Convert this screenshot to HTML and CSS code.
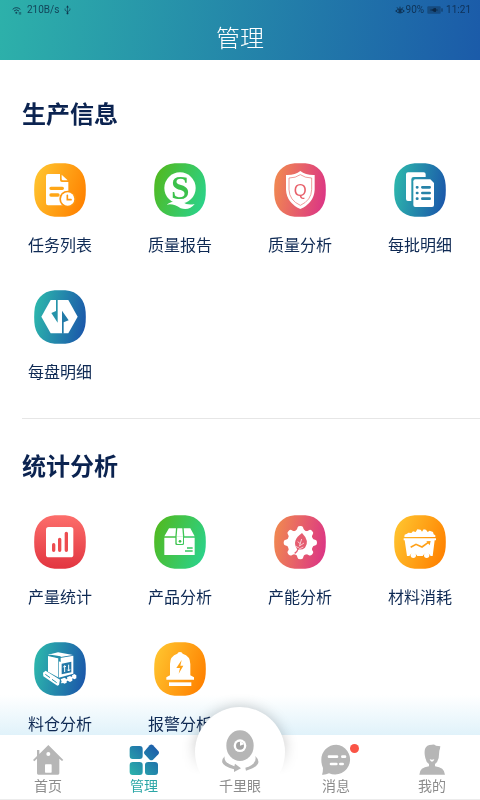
FILE: index.html
```html
<!DOCTYPE html>
<html lang="zh-CN">
<head>
<meta charset="utf-8">
<meta name="viewport" content="width=device-width, initial-scale=1">
<title>管理</title>
<link rel="stylesheet" href="styles.css">
</head>
<body>
<svg class="defs" aria-hidden="true">
  <defs>
    <linearGradient id="orange" x1="0" y1="0.3" x2="1" y2="0.7"><stop offset="0" stop-color="#ffc22d"/><stop offset="1" stop-color="#ff8100"/></linearGradient>
    <linearGradient id="green" x1="0" y1="0.3" x2="1" y2="0.7"><stop offset="0" stop-color="#50ba22"/><stop offset="1" stop-color="#2bd28a"/></linearGradient>
    <linearGradient id="pink" x1="0" y1="0.4" x2="1" y2="0.6"><stop offset="0" stop-color="#f08751"/><stop offset="1" stop-color="#dc3684"/></linearGradient>
    <linearGradient id="blue" x1="0" y1="0.4" x2="1" y2="0.6"><stop offset="0" stop-color="#2cb5ac"/><stop offset="1" stop-color="#1b58aa"/></linearGradient>
    <linearGradient id="red" x1="0" y1="0" x2="0" y2="1"><stop offset="0" stop-color="#fc6e6b"/><stop offset="1" stop-color="#e23540"/></linearGradient>
    <linearGradient id="tab" gradientUnits="userSpaceOnUse" x1="5" y1="90" x2="90" y2="5"><stop offset="0" stop-color="#2bb2ab"/><stop offset="1" stop-color="#1b58aa"/></linearGradient>
    <path id="blob" d="M62 1Q78 0 94 1C132 4 153 30 155 66Q156 81 155 96C153 132 132 158 94 161Q78 162 62 161C24 158 3 132 1 96Q0 81 1 66C3 30 24 4 62 1Z"/>
  </defs>
</svg>
<div class="app">
  <header class="header">
    <div class="status">
      <div class="status-group">
        <svg class="wifi" viewBox="0 0 30 27"><path d="M2 10Q13 0 25 10M6 15Q13 8 21 15" fill="none" stroke="currentColor" stroke-width="3"/><circle cx="13" cy="20" r="3" fill="currentColor"/><path d="M22 18v8M26 18v8" stroke="currentColor" stroke-width="2"/></svg>
        <span>210B/s</span>
        <svg class="usb" viewBox="0 0 20 27"><path d="M10 3V24M3 9v5l7 5 7-5V9" fill="none" stroke="currentColor" stroke-width="2"/><path d="M6 6l4-6 4 6Z" fill="currentColor"/><circle cx="10" cy="23" r="3" fill="currentColor"/></svg>
      </div>
      <div class="status-group status-right">
        <svg class="eye" viewBox="0 0 30 27"><path d="M2 15Q15 3 28 15Q15 27 2 15ZM15 2v6M6 4l4 5M24 4l-4 5" fill="none" stroke="currentColor" stroke-width="3"/><circle cx="15" cy="15" r="5" fill="currentColor"/></svg>
        <span>90%</span>
        <svg class="battery" viewBox="0 0 48 24"><rect x="1" y="1" width="40" height="22" rx="3" fill="currentColor" opacity=".5"/><path d="M10 12h22" stroke="currentColor" stroke-width="3"/><path d="M15 12l6-6h6v12h-6Z" fill="currentColor"/><path d="M45 7v10" stroke="currentColor" stroke-width="3"/></svg>
        <span>11:21</span>
      </div>
    </div>
    <h1 class="title">管理</h1>
  </header>

  <main class="content">
    <section class="section">
      <h2 class="heading">生产信息</h2>
      <div class="grid">
        <a class="tile" href="#tasks">
          <svg class="icon" viewBox="0 0 156 162"><use href="#blob" fill="url(#orange)"/><path d="M42 33H78V51Q78 57 84 57H103V120Q103 127 97 127H42Q36 127 36 120V40Q36 33 42 33ZM83 35L101 52H87Q83 52 83 48Z" fill="#fff"/><path d="M51 76H85M51 96H72" stroke="#ffa616" stroke-width="10" stroke-linecap="round"/><circle cx="101" cy="108" r="25" fill="#ff9710"/><circle cx="101" cy="108" r="20" fill="#fff"/><path d="M100 97V110H111" fill="none" stroke="#ff9710" stroke-width="5" stroke-linecap="round"/></svg>
          <span class="label">任务列表</span>
        </a>
        <a class="tile" href="#quality-report">
          <svg class="icon" viewBox="0 0 156 162"><use href="#blob" fill="url(#green)"/><circle cx="78" cy="75" r="47" fill="#fff"/><text class="mark-s" x="79" y="107" text-anchor="middle" fill="#3cc14b">S</text><path d="M38 125Q54 112 72 115L86 117Q100 128 122 123Q106 144 80 136Q58 120 38 125Z" fill="#fff"/></svg>
          <span class="label">质量报告</span>
        </a>
        <a class="tile" href="#quality-analysis">
          <svg class="icon" viewBox="0 0 156 162"><use href="#blob" fill="url(#pink)"/><path d="M79 24Q95 37 122 36V80Q120 119 79 138Q38 119 36 80V36Q63 37 79 24Z" fill="#fff"/><path d="M79 35Q93 45 113 45V80Q112 112 79 127Q46 112 45 80V45Q65 45 79 35Z" fill="none" stroke="#e96a68" stroke-width="2"/><text class="mark-q" x="79" y="98" text-anchor="middle" fill="#e8606a">Q</text></svg>
          <span class="label">质量分析</span>
        </a>
        <a class="tile" href="#batch">
          <svg class="icon" viewBox="0 0 156 162"><use href="#blob" fill="url(#blue)"/><path d="M42 28H89Q95 28 95 34V42H59Q52 42 52 49V114H42Q36 114 36 108V34Q36 28 42 28Z" fill="#fff"/><path d="M64 49H109L120 60V126Q120 132 114 132H64Q58 132 58 126V55Q58 49 64 49Z" fill="#fff"/><path d="M85 73H107M85 90H107M85 107H107" stroke="#2783a8" stroke-width="8" stroke-linecap="round"/><path d="M69 73h1M69 90h1M69 107h1" stroke="#2783a8" stroke-width="8" stroke-linecap="round"/></svg>
          <span class="label">每批明细</span>
        </a>
        <a class="tile" href="#plate">
          <svg class="icon" viewBox="0 0 156 162"><use href="#blob" fill="url(#blue)"/><path d="M50 30H103L131 80 103 130H50L22 80Z" fill="#fff"/><path d="M66 29H71V98L52 69 66 63Z" fill="#2593a9"/><path d="M84 131H89V97L104 91 84 62Z" fill="#227aa8"/></svg>
          <span class="label">每盘明细</span>
        </a>
      </div>
    </section>

    <section class="section">
      <h2 class="heading">统计分析</h2>
      <div class="grid">
        <a class="tile" href="#output">
          <svg class="icon" viewBox="0 0 156 162"><use href="#blob" fill="url(#red)"/><rect x="36" y="36" width="82" height="91" rx="8" fill="#fff"/><path d="M59 89V106M77 73V106M97 55V106" stroke="#ed4c50" stroke-width="10" stroke-linecap="round"/></svg>
          <span class="label">产量统计</span>
        </a>
        <a class="tile" href="#product">
          <svg class="icon" viewBox="0 0 156 162"><use href="#blob" fill="url(#green)"/><path d="M45 40H66L64 64H31ZM70 40H85L87 64H68ZM89 40H109L122 64H91ZM31 68H64V86Q64 90 68 90H86Q90 90 90 86V68H122V120H31Z" fill="#fff"/><path d="M68 64H87V84Q87 87 84 87H71Q68 87 68 84Z" fill="#fff"/><circle cx="78" cy="79" r="4" fill="#3cc14b"/><path d="M99 99H116M93 108H116" stroke="#36c75f" stroke-width="4"/></svg>
          <span class="label">产品分析</span>
        </a>
        <a class="tile" href="#capacity">
          <svg class="icon" viewBox="0 0 156 162"><use href="#blob" fill="url(#pink)"/><g fill="#fff"><circle cx="79" cy="83" r="39"/><path id="tooth" d="M64 49Q70 44 71 37Q72 33 79 33T87 37Q88 44 94 49V117Q88 122 87 129Q86 133 79 133T71 129Q70 122 64 117Z"/><use href="#tooth" transform="rotate(45 79 83)"/><use href="#tooth" transform="rotate(90 79 83)"/><use href="#tooth" transform="rotate(135 79 83)"/></g><path d="M84 54Q108 78 93 98Q83 107 69 102Q52 77 84 54Z" fill="#e55d70"/><path d="M83 72L76 94M79 86L71 80M78 92L90 84M75 99L65 94M75 102L88 96" fill="none" stroke="#fff" stroke-width="2"/><path d="M73 100Q70 110 62 115" fill="none" stroke="#e55d70" stroke-width="4"/></svg>
          <span class="label">产能分析</span>
        </a>
        <a class="tile" href="#material">
          <svg class="icon" viewBox="0 0 156 162"><use href="#blob" fill="url(#orange)"/><path d="M31 66L32 59 39 56 43 53 52 54 57 49 65 51 70 43 80 44 84 50 89 43 96 44 101 51 107 47 117 51 119 58 124 61V66Z" fill="#fff"/><path d="M29 70H126V76H122L116 123H110A13 13 0 0 0 86 123H70A13 13 0 0 0 46 123H39L32 76H29Z" fill="#fff"/><circle cx="58" cy="121" r="8" fill="#fff"/><circle cx="98" cy="121" r="8" fill="#fff"/><path d="M50 97L66 88 84 96 103 82" fill="none" stroke="#ffa018" stroke-width="5"/><path d="M97 79L110 78 107 91Z" fill="#ffa018"/></svg>
          <span class="label">材料消耗</span>
        </a>
        <a class="tile" href="#silo">
          <svg class="icon" viewBox="0 0 156 162"><use href="#blob" fill="url(#blue)"/><path d="M42 38L72 31 117 39 75 46ZM42 42L72 49V106L42 89ZM74 49L118 41V95L74 107Z" fill="#fff"/><path d="M50 38L80 43V60L74 58V47L45 41Z" fill="#258ea9"/><path d="M83 65L112 59V91L83 97Z" fill="#2478a7"/><path d="M92 90V71L88 76M92 71L96 75M104 68V87L100 83M104 87L108 82" fill="none" stroke="#fff" stroke-width="3"/><path d="M27 92L35 86 78 113 75 129 70 131 28 103Z" fill="#fff"/><path d="M34 97L48 107M54 112L68 122" stroke="#2596aa" stroke-width="3"/><path d="M80 112L91 107 98 111V122L91 125 84 121ZM99 106L108 102 115 106V116L108 120 101 116ZM114 100L121 96 127 100V109L121 112 116 109Z" fill="#fff"/><path d="M82 122L125 101" stroke="#fff" stroke-width="5"/></svg>
          <span class="label">料仓分析</span>
        </a>
        <a class="tile" href="#alarm">
          <svg class="icon" viewBox="0 0 156 162"><use href="#blob" fill="url(#orange)"/><path d="M70 35Q71 30 78 30T86 35Q109 42 109 66V100L120 106V113H37V106L48 100V66Q48 42 70 35Z" fill="#fff"/><rect x="45" y="121" width="67" height="11" fill="#fff"/><path d="M83 54L67 78H78L74 95 88 71H79Z" fill="#ffa216"/></svg>
          <span class="label">报警分析</span>
        </a>
      </div>
    </section>
  </main>

  <nav class="tabs">
    <div class="bump"></div>
    <a class="tab" href="#home">
      <svg class="tab-icon" viewBox="0 0 96 96"><path d="M15 18H22V30L49 3 94 48 90 51 82 44V88Q82 92 78 92H19Q15 92 15 88V44L7 52 3 48 15 36Z" fill="#b6b6b6"/><circle cx="49" cy="30" r="6" fill="#fff"/><rect x="39" y="61" width="20" height="25" rx="2" fill="#fff"/></svg>
      <span>首页</span>
    </a>
    <a class="tab tab-active" href="#manage">
      <svg class="tab-icon" viewBox="0 0 96 96"><g fill="url(#tab)"><rect x="5" y="6" width="39" height="39" rx="9"/><rect x="5" y="54" width="39" height="39" rx="9"/><rect x="51" y="54" width="39" height="39" rx="9"/><path d="M65 4Q70-1 75 4L91 21Q95 26 91 31L75 47Q70 51 65 47L50 31Q46 26 50 21Z"/></g></svg>
      <span>管理</span>
    </a>
    <a class="tab tab-center" href="#eye">
      <svg class="camera" viewBox="0 0 120 132"><ellipse cx="60" cy="47" rx="41" ry="46" fill="#b6b6b6"/><circle cx="60" cy="47" r="19" fill="#fff"/><circle cx="60" cy="47" r="12" fill="#a4a4a4"/><path d="M60 47V35A12 12 0 0 1 72 43Z" fill="#fff"/><path d="M14 79Q10 98 43 109L45 101 63 115 42 126 42 118Q-10 104 14 79ZM106 78Q134 105 78 122L76 113Q112 104 106 78Z" fill="#b6b6b6"/></svg>
      <span>千里眼</span>
    </a>
    <a class="tab" href="#messages">
      <span class="icon-wrap"><svg class="tab-icon" viewBox="0 0 96 96"><path d="M49 2A45 45 0 1 1 27 88Q17 93 6 92 9 84 9 72 4 62 4 47A45 45 0 0 1 49 2Z" fill="#b6b6b6"/><path d="M27 38H51M67 38H75M33 60H49M61 60H68" stroke="#fff" stroke-width="8" stroke-linecap="round"/></svg><i class="dot"></i></span>
      <span>消息</span>
    </a>
    <a class="tab" href="#me">
      <svg class="tab-icon" viewBox="0 0 96 96"><path d="M27 15Q31 2 48 2Q54 0 60 5L73 7Q72 16 70 20L68 42Q65 54 57 60V67Q85 70 87 92H10Q11 70 39 67V60Q30 54 28 42Q24 28 27 15Z" fill="#b6b6b6"/><path d="M41 45Q48 49 55 45Q53 53 48 53T41 45Z" fill="#fff"/></svg>
      <span>我的</span>
    </a>
  </nav>
</div>
</body>
</html>
```
FILE: styles.css
```css
* {
  box-sizing: border-box;
}

body {
  margin: 0;
  font-family: Roboto, "Noto Sans CJK SC", sans-serif;
  background: #fff;
}

a {
  color: inherit;
  text-decoration: none;
}

svg {
  display: block;
}

.defs {
  position: absolute;
  width: 0;
  height: 0;
}

.app {
  display: flex;
  flex-direction: column;
  height: 100vh;
}

.header {
  flex: none;
  padding-bottom: 3px;
  background: linear-gradient(97deg, #2db1aa, #1b5ba9);
  color: #fff;
}

.status {
  display: flex;
  justify-content: space-between;
  height: 20px;
  padding: 0 9px 0 12px;
  font-size: 10px;
  line-height: 20px;
  color: rgba(10, 34, 60, 0.75);
}

.status-group {
  display: flex;
  align-items: center;
  gap: 5px;
}

.status-right {
  gap: 1px;
}

.wifi,
.eye {
  width: 10px;
  height: 9px;
}

.usb {
  width: 7px;
  height: 10px;
}

.battery {
  width: 16px;
  height: 8px;
  margin: 0 2px;
}

.title {
  margin: 0;
  padding-top: 1px;
  font-size: 24px;
  line-height: 36px;
  font-weight: 300;
  text-align: center;
}

.content {
  flex: 1;
  min-height: 0;
  padding-top: 7px;
  overflow-y: auto;
  scrollbar-width: none;
}

.section {
  padding: 32px 0 33px;
}

.section + .section {
  border-top: 1px solid transparent;
  background: linear-gradient(#e6e6e6, #e6e6e6) 22px 0 / 100% 1px no-repeat border-box;
}

.heading {
  margin: 0 22px 32px;
  font-size: 24px;
  line-height: 32px;
  font-weight: 700;
  color: #0b2350;
}

.grid {
  display: grid;
  grid-template-columns: repeat(4, 1fr);
  row-gap: 32px;
}

.tile {
  display: flex;
  flex-direction: column;
  align-items: center;
  gap: 17px;
}

.icon {
  width: 52px;
  height: 54px;
}

.label {
  font-size: 16px;
  line-height: 24px;
  color: #0f2a54;
}

.mark-s {
  font: 700 100px "Liberation Serif", serif;
}

.mark-q {
  font: 400 50px "Liberation Sans", sans-serif;
}

.tabs {
  position: relative;
  flex: none;
  display: grid;
  grid-template-columns: repeat(5, 1fr);
  height: 65px;
  padding-top: 9px;
  border-bottom: 1px solid #ececec;
  background: #fff;
}

.tabs::before {
  content: "";
  position: absolute;
  right: 0;
  bottom: 100%;
  left: 0;
  height: 40px;
  background: linear-gradient(#fff, #e0f2fa);
  mix-blend-mode: multiply;
  pointer-events: none;
}

.bump {
  position: absolute;
  top: -44px;
  left: 50%;
  width: 124px;
  height: 88px;
  margin-left: -62px;
  overflow: hidden;
  mask-image: linear-gradient(#000 60%, transparent 95%);
}

.bump::before {
  content: "";
  display: block;
  width: 90px;
  height: 90px;
  margin: 16px auto 0;
  border-radius: 50%;
  background: #fff;
  box-shadow: 0 0 14px rgba(0, 0, 0, 0.22);
}

.tab {
  position: relative;
  display: flex;
  flex-direction: column;
  align-items: center;
  justify-content: flex-end;
  height: 52px;
  font-size: 14px;
  line-height: 20px;
  color: #8c8c8c;
}

.tab-active {
  color: #2ba6a6;
}

.tab-icon {
  width: 32px;
  height: 32px;
}

.camera {
  flex: none;
  width: 40px;
  height: 44px;
  margin-bottom: 2px;
}

.icon-wrap {
  position: relative;
}

.dot {
  position: absolute;
  top: 0;
  right: -7px;
  width: 9px;
  height: 9px;
  border-radius: 50%;
  background: #fa5446;
}
```
